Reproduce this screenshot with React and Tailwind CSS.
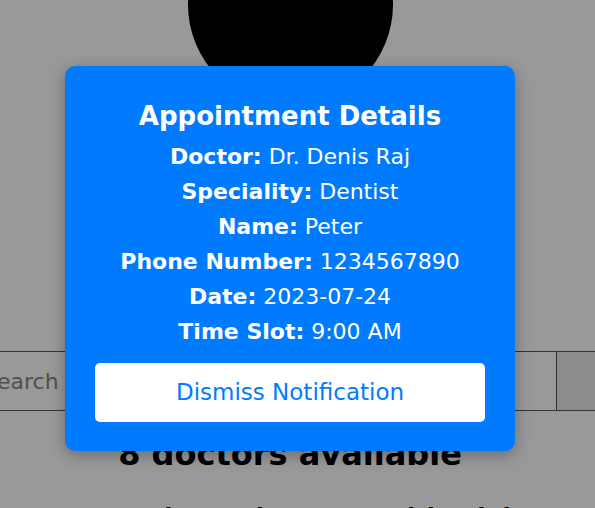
const details = [
  ["Doctor:", "Dr. Denis Raj"],
  ["Speciality:", "Dentist"],
  ["Name:", "Peter"],
  ["Phone Number:", "1234567890"],
  ["Date:", "2023-07-24"],
  ["Time Slot:", "9:00 AM"],
];

export default function App() {
  return (
    <div className="relative h-[508px] w-[595px] overflow-hidden bg-white font-['DejaVu_Sans',sans-serif]">
      <div className="flex w-[580px] flex-col items-center">
        <div className="mt-[-98px] h-[205px] w-[205px] shrink-0 rounded-full bg-black" />

        <div className="mt-[244px] ml-[-28px] flex h-[60px] w-[680px] self-start">
          <input
            type="text"
            placeholder="Search doctors by name"
            className="h-full w-[585px] border border-[#555] px-[10px] text-[22px] text-[#555] placeholder:text-[#858585] outline-none"
          />
          <button className="h-full flex-1 border border-l-0 border-[#555] bg-[#e9e9e9]" />
        </div>

        <h2 className="mt-[24px] text-[32px] font-bold leading-[38px] text-black">8 doctors available</h2>
        <p className="mt-[27px] self-start pl-[113px] whitespace-nowrap text-[24px] font-bold leading-[36px] text-black">
          Book appointments with minimum wait-time & verified details
        </p>
      </div>

      <div className="absolute inset-0 bg-black/40" />

      <div className="absolute left-[65px] top-[66px] flex w-[450px] flex-col items-center rounded-[10px] bg-[#007bff] px-[30px] pt-[32px] pb-[29px] text-white shadow-[0_4px_16px_rgba(0,0,0,0.3)]">
        <h3 className="text-[26px] font-bold leading-[36px]">Appointment Details</h3>
        <div className="mt-[5px] flex flex-col items-center">
          {details.map(([label, value]) => (
            <p key={label} className="text-[22px] leading-[35px]">
              <strong className="font-bold">{label}</strong> {value}
            </p>
          ))}
        </div>
        <button className="mt-[14px] h-[59px] w-full rounded-[5px] bg-white text-[23px] text-[#007bff]">
          Dismiss Notification
        </button>
      </div>
    </div>
  );
}
